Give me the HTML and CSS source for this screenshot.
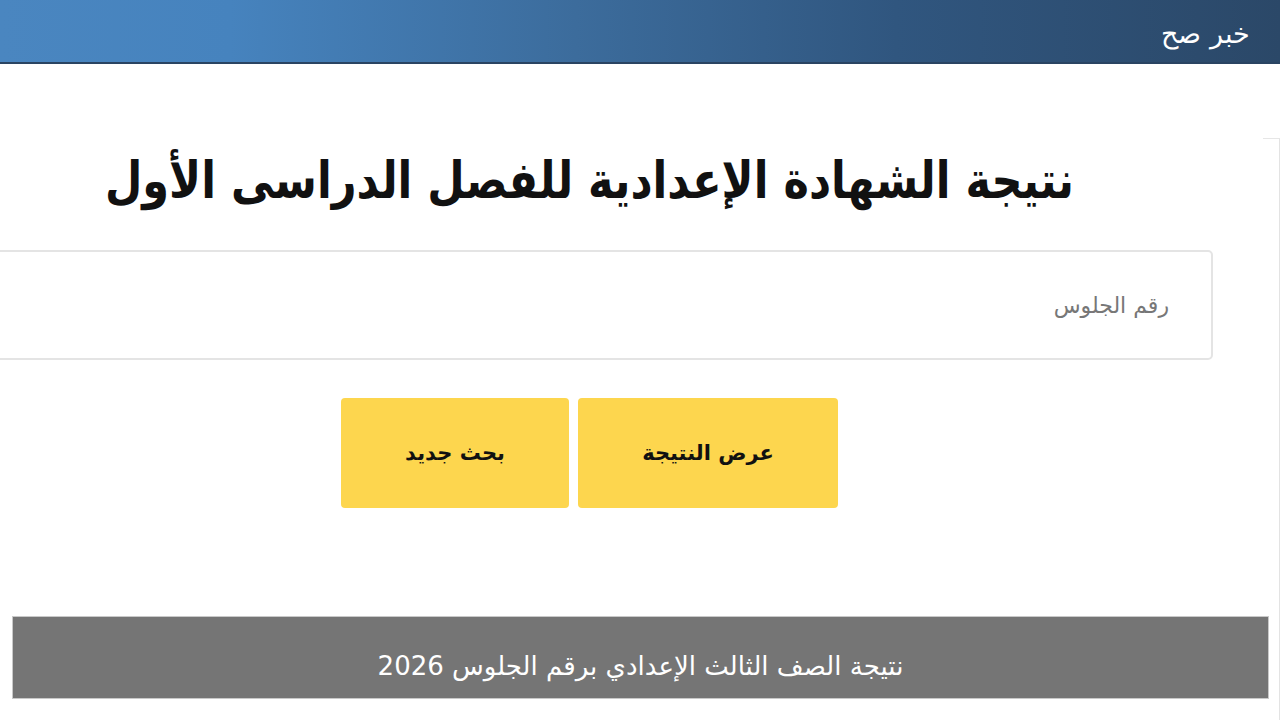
FILE: index.html
```html
<!DOCTYPE html>
<html lang="ar" dir="rtl">
<head>
<meta charset="utf-8">
<title>نتيجة الشهادة الإعدادية</title>
<link rel="stylesheet" href="styles.css">
</head>
<body>
<header class="topbar">
  <div class="brand">خبر صح</div>
</header>
<div class="layout">
  <aside class="sidebar"></aside>
  <main class="main">
    <h1 class="title">نتيجة الشهادة الإعدادية للفصل الدراسى الأول</h1>
    <form class="form">
      <input class="seat" type="text" placeholder="رقم الجلوس">
      <div class="actions">
        <button type="button" class="btn">عرض النتيجة</button>
        <button type="button" class="btn btn-new">بحث جديد</button>
      </div>
    </form>
  </main>
</div>
<div class="banner">نتيجة الصف الثالث الإعدادي برقم الجلوس 2026</div>
</body>
</html>
```
FILE: styles.css
```css
html, body {
  margin: 0;
  padding: 0;
  height: 100%;
  overflow: hidden;
  background: #ffffff;
  font-family: "DejaVu Sans", sans-serif;
}
.topbar {
  height: 62px;
  border-bottom: 2px solid #2a4462;
  background: linear-gradient(to right, #4a86c0 0%, #4683be 18%, #3c6c9c 45%, #30567f 70%, #2b4868 100%);
  display: flex;
  align-items: center;
  padding-right: 30px;
}
.brand {
  color: #ffffff;
  font-size: 27px;
  font-weight: 300;
  padding-top: 4px;
}
.layout {
  display: flex;
  width: 1280px;
  height: 656px;
}
.sidebar {
  flex: 0 0 16px;
  margin-top: 74px;
  border-top: 1px solid #e6e6e6;
  border-right: 1px solid #e3e3e3;
}
.main {
  flex: 0 0 1247px;
  margin-right: 50px;
  display: flex;
  flex-direction: column;
  align-items: center;
}
.title {
  margin: 82px 0 0;
  font-size: 51px;
  font-weight: 700;
  color: #111111;
  line-height: 70px;
  text-align: center;
  white-space: nowrap;
  transform: scaleX(0.845);
}
.form {
  width: 100%;
  display: flex;
  flex-direction: column;
  align-items: center;
}
.seat {
  box-sizing: border-box;
  width: 100%;
  height: 110px;
  margin-top: 34px;
  border: 2px solid #e4e4e4;
  border-radius: 5px;
  padding: 0 42px;
  font-family: "DejaVu Sans", sans-serif;
  font-size: 22px;
  color: #333;
  background: #fff;
  outline: none;
}
.seat::placeholder {
  color: #777777;
}
.actions {
  display: flex;
  gap: 9px;
  margin-top: 38px;
}
.btn {
  width: 260px;
  height: 110px;
  border: none;
  border-radius: 4px;
  background: #fdd64e;
  color: #111111;
  font-family: "DejaVu Sans", sans-serif;
  font-size: 21px;
  font-weight: 700;
  cursor: pointer;
}
.btn-new {
  width: 228px;
}
.banner {
  position: fixed;
  left: 12px;
  right: 11px;
  bottom: 21px;
  height: 83px;
  box-sizing: border-box;
  background: #757575;
  border: 1px solid #c9c9c9;
  color: #ffffff;
  font-size: 26px;
  display: flex;
  align-items: center;
  justify-content: center;
  padding-top: 17px;
}
```
